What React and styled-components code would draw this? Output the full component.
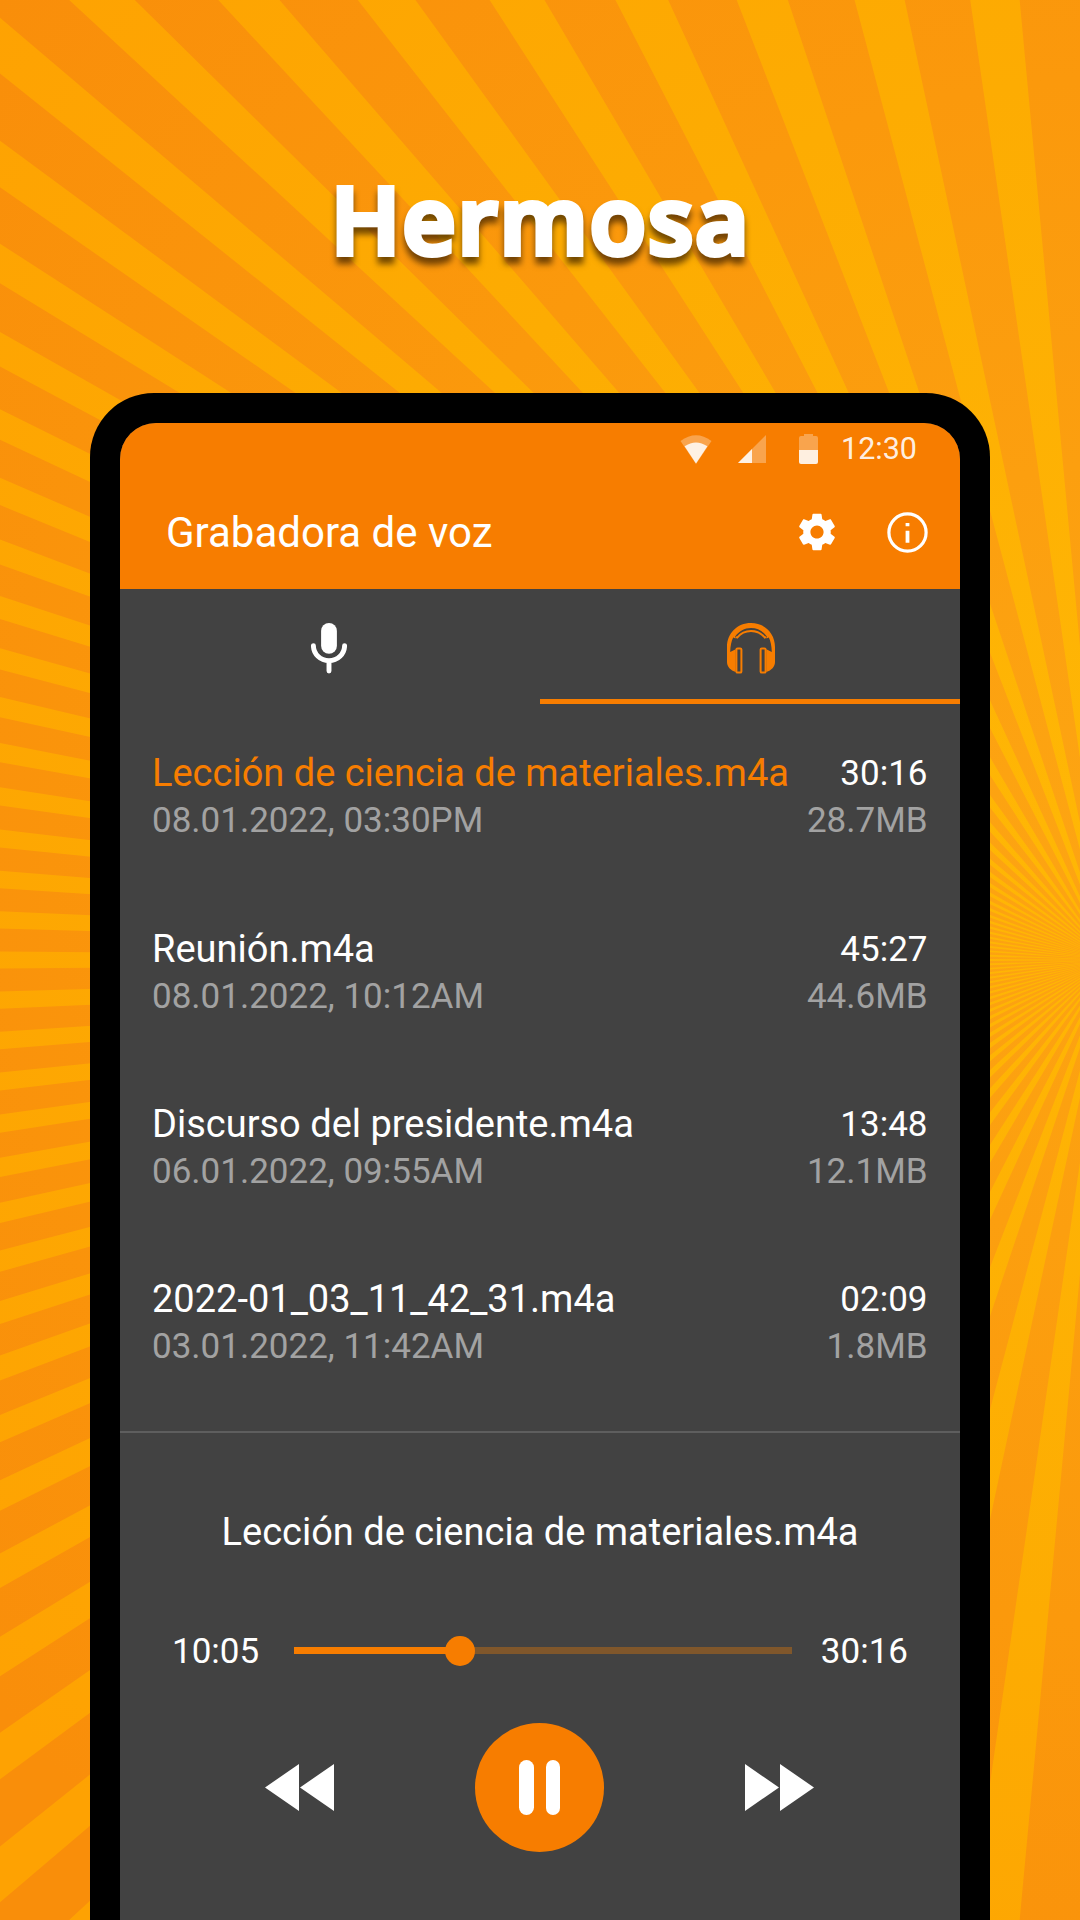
import React from "react";
import styled, { createGlobalStyle } from "styled-components";

const ORANGE = "#f77d00";

const GlobalStyle = createGlobalStyle`
  html, body { margin: 0; padding: 0; }
  *, *::before, *::after { box-sizing: border-box; }
  body { background: #fb970b; font-family: Roboto, "Noto Sans", sans-serif; }
`;

const Page = styled.main`
  position: relative;
  width: 1080px;
  height: 1920px;
  overflow: hidden;
  display: flex;
  flex-direction: column;
  align-items: center;
`;

const Backdrop = styled.svg`
  position: absolute;
  inset: 0;
  width: 100%;
  height: 100%;
`;

const Hero = styled.header`
  position: relative;
  flex: 0 0 393px;
  display: flex;
  align-items: center;
  justify-content: center;
  padding: 44px 0 0 2px;
`;

const HeroTitle = styled.h1`
  margin: 0;
  color: #fff;
  font-family: "Open Sans", "Noto Sans", sans-serif;
  font-weight: 600;
  font-size: 92px;
  line-height: 120px;
  letter-spacing: 2.3px;
  -webkit-text-stroke: 6px #fff;
  stroke-linejoin: round;
  filter: drop-shadow(0 7px 3px rgba(40, 20, 0, 0.65));
`;

const Phone = styled.section`
  position: relative;
  flex: 1;
  width: 900px;
  padding: 30px 30px 0;
  background: #000;
  border-radius: 64px 64px 0 0;
`;

const Screen = styled.div`
  height: 100%;
  display: flex;
  flex-direction: column;
  overflow: hidden;
  background: #424242;
  border-radius: 36px 36px 0 0;
  color: #fff;
`;

const AppHeader = styled.div`
  flex: 0 0 166px;
  background: ${ORANGE};
`;

const StatusBar = styled.div`
  height: 52px;
  display: flex;
  align-items: center;
  justify-content: flex-end;
  padding-right: 43px;
`;

const StatusIcon = styled.svg`
  display: block;
  flex: none;
  margin-right: ${(p) => p.$after}px;
`;

const Clock = styled.span`
  font-size: 30.5px;
  line-height: 52px;
  color: rgba(255, 255, 255, 0.9);
`;

const TitleBar = styled.div`
  height: 114px;
  display: flex;
  align-items: center;
  padding: 0 32px 0 46px;
`;

const AppTitle = styled.h2`
  margin: 0;
  flex: 1;
  font-weight: 400;
  font-size: 42px;
  line-height: 54px;
  padding-top: 2px;
`;

const IconButton = styled.button`
  display: block;
  border: 0;
  padding: 0;
  background: none;
  line-height: 0;
  margin-left: ${(p) => p.$before || 0}px;
`;

const Tabs = styled.nav`
  flex: 0 0 115px;
  display: grid;
  grid-template-columns: 1fr 1fr;
`;

const Tab = styled.div`
  display: flex;
  justify-content: center;
  padding: 34px ${(p) => (p.$active ? "0 0 2px" : "2px 0 0")};
  border-bottom: 5px solid ${(p) => (p.$active ? ORANGE : "transparent")};
`;

const List = styled.ul`
  flex: 0 0 727px;
  margin: 0;
  padding: 45.45px 32.5px 0 32px;
  list-style: none;
  display: flex;
  flex-direction: column;
  gap: 79.3px;
`;

const Row = styled.li`
  display: grid;
  grid-template-columns: 1fr auto;
  grid-auto-rows: 48px;
  line-height: 48px;
  white-space: nowrap;
`;

const Name = styled.span`
  font-size: 38px;
  color: ${(p) => (p.$active ? ORANGE : "#fff")};
`;

const Duration = styled.span`
  padding-top: 1px;
  font-size: 35px;
  text-align: right;
`;

const Meta = styled.span`
  font-size: 35px;
  color: #a2a2a2;
  text-align: ${(p) => (p.$end ? "right" : "left")};
`;

const Player = styled.section`
  flex: 1;
  display: flex;
  flex-direction: column;
  align-items: center;
  border-top: 2px solid #5e5e5e;
  padding-top: 75px;
`;

const Track = styled.div`
  font-size: 38px;
  line-height: 48px;
`;

const Progress = styled.div`
  margin-top: 72px;
  width: 100%;
  height: 48px;
  padding: 0 52px;
  display: flex;
  align-items: center;
  justify-content: space-between;
  font-size: 35px;
  line-height: 48px;
`;

const Slider = styled.div`
  width: 498px;
  height: 30px;
  margin: 0 0 3px 6px;
  display: flex;
  align-items: center;
`;

const Played = styled.div`
  height: 7px;
  background: ${ORANGE};
`;

const Thumb = styled.div`
  flex: none;
  width: 30px;
  height: 30px;
  margin: 0 -15px;
  border-radius: 50%;
  background: ${ORANGE};
  z-index: 1;
`;

const Remaining = styled.div`
  flex: 1;
  height: 7px;
  background: #80572b;
`;

const Controls = styled.div`
  margin: 46.5px 0.5px 0 0;
  width: 549px;
  display: flex;
  align-items: center;
  justify-content: space-between;
`;

const PauseButton = styled.button`
  width: 129px;
  height: 129px;
  border: 0;
  padding: 0;
  border-radius: 50%;
  background: ${ORANGE};
  display: flex;
  align-items: center;
  justify-content: center;
  gap: 12px;
`;

const PauseBar = styled.span`
  width: 14.5px;
  height: 55px;
  border-radius: 8px;
  background: #fff;
`;

const RAYS = 96;
const STRETCH = 1.817;
const STEP = (Math.PI * 2) / RAYS;
const HALF = STEP * 0.2155;

const rayPath = Array.from({ length: RAYS }, (_, i) => {
  const corner = (angle) =>
    `${(1109.3 + Math.cos(angle) * 3000 * STRETCH).toFixed(1)} ${(960 + Math.sin(angle) * 3000).toFixed(1)}`;
  return `M1109.3 960L${corner(i * STEP - HALF)}L${corner(i * STEP + HALF)}Z`;
}).join("");

function Sunburst() {
  return (
    <Backdrop viewBox="0 0 1080 1920">
      <defs>
        <radialGradient id="base" gradientUnits="userSpaceOnUse" cx="1110" cy="850" r="1400">
          <stop offset="0" stopColor="#fda512" />
          <stop offset="0.55" stopColor="#fb990c" />
          <stop offset="1" stopColor="#f98e0a" />
        </radialGradient>
        <radialGradient id="ray" gradientUnits="userSpaceOnUse" cx="1110" cy="850" r="1400">
          <stop offset="0" stopColor="#ffb705" />
          <stop offset="0.55" stopColor="#fdac02" />
          <stop offset="1" stopColor="#fea202" />
        </radialGradient>
      </defs>
      <rect width="1080" height="1920" fill="url(#base)" />
      <path d={rayPath} fill="url(#ray)" />
    </Backdrop>
  );
}

function Wifi() {
  return (
    <StatusIcon width="32" height="29" viewBox="0 0 32 29" $after={26}>
      <path d="M0.5 6Q16 -5.5 31.5 6L16 29Z" fill="#fff" fillOpacity="0.3" />
      <path d="M4.6 11.2Q16 3.6 27.4 11.2L16 28.5Z" fill="#fff" fillOpacity="0.85" />
    </StatusIcon>
  );
}

function Signal() {
  return (
    <StatusIcon width="28" height="28" viewBox="0 0 28 28" $after={33}>
      <path d="M0 28L28 0V28Z" fill="#fff" fillOpacity="0.3" />
      <path d="M0 28L14 14V28Z" fill="#fff" fillOpacity="0.85" />
    </StatusIcon>
  );
}

function Battery() {
  return (
    <StatusIcon width="19" height="30" viewBox="0 0 19 30" $after={23}>
      <path d="M0 16V4Q0 2 2 2H5V0H14V2H17Q19 2 19 4V16Z" fill="#fff" fillOpacity="0.3" />
      <path d="M0 16H19V28Q19 30 17 30H2Q0 30 0 28Z" fill="#fff" fillOpacity="0.88" />
    </StatusIcon>
  );
}

function Gear() {
  return (
    <svg width="44" height="44" viewBox="0 0 24 24" fill="#fff">
      <path d="M19.43 12.98c.04-.32.07-.64.07-.98s-.03-.66-.07-.98l2.11-1.65c.19-.15.24-.42.12-.64l-2-3.46c-.12-.22-.39-.3-.61-.22l-2.49 1c-.52-.4-1.08-.73-1.69-.98l-.38-2.65C14.46 2.18 14.25 2 14 2h-4c-.25 0-.46.18-.49.42l-.38 2.65c-.61.25-1.17.59-1.69.98l-2.49-1c-.23-.09-.49 0-.61.22l-2 3.46c-.13.22-.07.49.12.64l2.11 1.65c-.04.32-.07.65-.07.98s.03.66.07.98l-2.11 1.65c-.19.15-.24.42-.12.64l2 3.46c.12.22.39.3.61.22l2.49-1c.52.4 1.08.73 1.69.98l.38 2.65c.03.24.24.42.49.42h4c.25 0 .46-.18.49-.42l.38-2.65c.61-.25 1.17-.59 1.69-.98l2.49 1c.23.09.49 0 .61-.22l2-3.46c.12-.22.07-.49-.12-.64l-2.11-1.65zM12 15.6c-1.98 0-3.6-1.62-3.6-3.6s1.62-3.6 3.6-3.6 3.6 1.62 3.6 3.6-1.62 3.6-3.6 3.6z" />
    </svg>
  );
}

function Info() {
  return (
    <svg width="41" height="41" viewBox="0 0 41 41">
      <circle cx="20.5" cy="20.5" r="18.6" fill="none" stroke="#fff" strokeWidth="3.2" />
      <path d="M18.6 11h3.8v3.3h-3.8zM18.6 18.7h3.8v12h-3.8z" fill="#fff" />
    </svg>
  );
}

function Mic() {
  return (
    <svg width="36" height="51" viewBox="0 0 36 51">
      <rect x="10.1" y="0" width="15.8" height="30.8" rx="7.9" fill="#fff" />
      <path d="M2.4 22.6A15.6 15.2 0 0 0 33.6 22.6M18 38V48" fill="none" stroke="#fff" strokeWidth="4.9" strokeLinecap="round" />
    </svg>
  );
}

function Headphones() {
  return (
    <svg width="48" height="51" viewBox="0 0 48 51">
      <g id="half">
        <path
          d="M24 0C10 0 0 10.5 0 24V39C0 43.5 3.5 47.5 8.7 49V26.2L3.2 29C3.4 23 4.4 18 6.2 14.6L8.6 15.6L8.2 13.4C12 8.2 17.5 5 24 5Z"
          fill={ORANGE}
        />
        <path d="M24 8C18 8 13.6 10.4 10.2 14.6L8.8 14" fill="none" stroke={ORANGE} strokeWidth="1.9" />
        <rect x="9.4" y="25.4" width="5" height="24.2" rx="1.2" fill="none" stroke={ORANGE} strokeWidth="2" />
      </g>
      <use href="#half" transform="matrix(-1 0 0 1 48 0)" />
    </svg>
  );
}

function Skip({ forward }) {
  return (
    <svg width="69" height="47" viewBox="0 0 69 47" fill="#fff">
      {forward ? <path d="M0 0L34 23.5L0 47ZM35 0L69 23.5L35 47Z" /> : <path d="M34 0L0 23.5L34 47ZM69 0L35 23.5L69 47Z" />}
    </svg>
  );
}

const recordings = [
  { name: "Lección de ciencia de materiales.m4a", date: "08.01.2022, 03:30PM", time: "30:16", size: "28.7MB", active: true },
  { name: "Reunión.m4a", date: "08.01.2022, 10:12AM", time: "45:27", size: "44.6MB" },
  { name: "Discurso del presidente.m4a", date: "06.01.2022, 09:55AM", time: "13:48", size: "12.1MB" },
  { name: "2022-01_03_11_42_31.m4a", date: "03.01.2022, 11:42AM", time: "02:09", size: "1.8MB" },
];

export default function App() {
  const played = 33.3;
  return (
    <Page>
      <GlobalStyle />
      <Sunburst />
      <Hero>
        <HeroTitle>Hermosa</HeroTitle>
      </Hero>
      <Phone>
        <Screen>
          <AppHeader>
            <StatusBar>
              <Wifi />
              <Signal />
              <Battery />
              <Clock>12:30</Clock>
            </StatusBar>
            <TitleBar>
              <AppTitle>Grabadora de voz</AppTitle>
              <IconButton aria-label="Ajustes"><Gear /></IconButton>
              <IconButton aria-label="Información" $before={48}><Info /></IconButton>
            </TitleBar>
          </AppHeader>
          <Tabs>
            <Tab><Mic /></Tab>
            <Tab $active><Headphones /></Tab>
          </Tabs>
          <List>
            {recordings.map((r) => (
              <Row key={r.name}>
                <Name $active={r.active}>{r.name}</Name>
                <Duration>{r.time}</Duration>
                <Meta>{r.date}</Meta>
                <Meta $end>{r.size}</Meta>
              </Row>
            ))}
          </List>
          <Player>
            <Track>Lección de ciencia de materiales.m4a</Track>
            <Progress>
              <span>10:05</span>
              <Slider>
                <Played style={{ width: `${played}%` }} />
                <Thumb />
                <Remaining />
              </Slider>
              <span>30:16</span>
            </Progress>
            <Controls>
              <IconButton aria-label="Retroceder"><Skip /></IconButton>
              <PauseButton aria-label="Pausa">
                <PauseBar />
                <PauseBar />
              </PauseButton>
              <IconButton aria-label="Avanzar"><Skip forward /></IconButton>
            </Controls>
          </Player>
        </Screen>
      </Phone>
    </Page>
  );
}
